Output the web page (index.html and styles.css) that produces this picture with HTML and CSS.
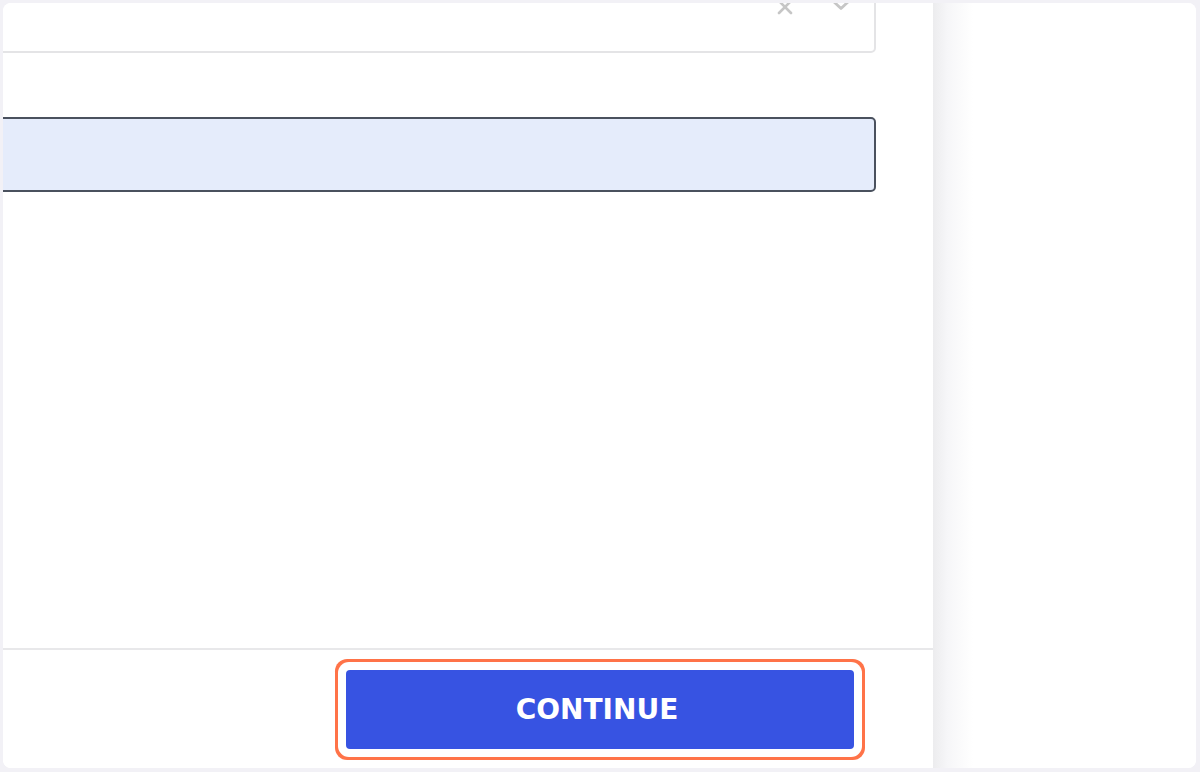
FILE: index.html
```html
<!DOCTYPE html>
<html lang="en">
<head>
<meta charset="utf-8">
<title>Continue</title>
<link rel="stylesheet" href="styles.css">
</head>
<body>
<div class="page">
  <div class="window">
    <div class="main">
      <div class="content">
        <div class="select">
          <span class="icon icon-clear">
            <svg width="16" height="16" viewBox="0 0 16 16"><path d="M2 2 L14 14 M14 2 L2 14" stroke="#c6c6c6" stroke-width="2.6" fill="none" stroke-linecap="round"/></svg>
          </span>
          <span class="icon icon-chevron">
            <svg width="20" height="20" viewBox="0 0 20 20"><path d="M2 5 L10 12.5 L18 5" stroke="#c6c6c6" stroke-width="2.8" fill="none" stroke-linecap="round" stroke-linejoin="round"/></svg>
          </span>
        </div>
        <div class="field"></div>
      </div>
      <div class="footer">
        <button class="continue" type="button">CONTINUE</button>
      </div>
    </div>
    <div class="side"></div>
  </div>
</div>
</body>
</html>
```

FILE: styles.css
```css
html, body {
  margin: 0;
  padding: 0;
}
body {
  background: #f2f1f6;
  font-family: "DejaVu Sans", "Open Sans", "Liberation Sans", sans-serif;
}
.page {
  width: 1200px;
  height: 772px;
  box-sizing: border-box;
  padding: 3px 4px 4px 3px;
}
.window {
  display: flex;
  height: 100%;
  background: #ffffff;
  border-radius: 8px;
  overflow: hidden;
}
.main {
  width: 930px;
  display: flex;
  flex-direction: column;
  background: #ffffff;
}
.content {
  flex: 1;
  overflow: hidden;
  display: flex;
  flex-direction: column;
  padding-right: 57px;
}
.select {
  margin-top: -50px;
  margin-left: -10px;
  height: 100px;
  border: 2px solid #e4e4e6;
  border-radius: 5px;
  box-sizing: border-box;
  display: flex;
  align-items: center;
  justify-content: flex-end;
  padding-right: 23px;
  gap: 38px;
}
.icon {
  display: flex;
}
.icon-clear {
  margin-top: 8px;
}
.icon-chevron {
  margin-top: 6px;
}
.field {
  margin-top: 64px;
  margin-left: -10px;
  height: 75px;
  box-sizing: border-box;
  background: #e5ecfb;
  border: 2px solid #4a515e;
  border-radius: 5px;
}
.footer {
  height: 120px;
  box-sizing: border-box;
  border-top: 2px solid #e8e8ea;
  display: flex;
  justify-content: flex-end;
  align-items: flex-start;
  padding: 20px 79px 0 0;
}
.continue {
  width: 508px;
  height: 79px;
  border: none;
  border-radius: 4px;
  background: #3753e2;
  color: #ffffff;
  font-family: "DejaVu Sans", "Open Sans", sans-serif;
  font-weight: 700;
  font-size: 28px;
  padding: 0 6px 0 0;
  box-shadow: 0 0 0 8px #ffffff, 0 0 0 11px #ff7348;
  cursor: pointer;
}
.side {
  flex: 1;
  background: linear-gradient(to right, #ececee 0, #f6f6f8 14px, #ffffff 40px);
}
```
